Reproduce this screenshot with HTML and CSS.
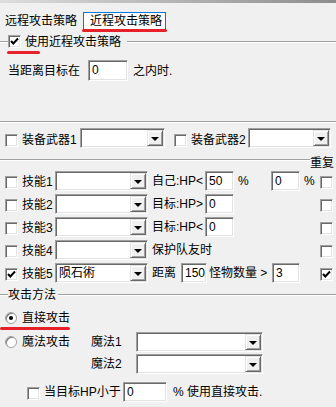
FILE: index.html
```html
<!DOCTYPE html>
<html lang="zh">
<head>
    <meta charset="UTF-8">
    <title>近程攻击策略</title>
    <link rel="stylesheet" href="styles.css">
</head>
<body>
    <div class="topbar"></div>

    <div class="tabs">
        <span class="tab">远程攻击策略</span>
        <span class="tab active">近程攻击策略<i class="mark mark-tab"></i></span>
    </div>

    <div class="ghead g-use">
        <i class="gl gl-left"></i>
        <span class="cb checked"><svg viewBox="0 0 9 9"><path d="M1 4 L3.3 6.5 L8 1.5" /></svg></span>
        <span class="gtitle">使用近程攻击策略</span>
        <i class="gl"></i>
        <i class="mark mark-cb"></i>
    </div>

    <div class="row row-dist">
        <span class="lbl-dist">当距离目标在</span>
        <span class="edit w40">0</span>
        <span class="after">之内时.</span>
    </div>

    <div class="sep sep-weapon"></div>

    <div class="row row-weapon">
        <span class="cb"></span>
        <span class="lbl-w">装备武器1</span>
        <span class="combo w85"><span class="combo-btn"></span></span>
        <span class="cb cb2"></span>
        <span class="lbl-w">装备武器2</span>
        <span class="combo w83"><span class="combo-btn"></span></span>
    </div>

    <div class="ghead g-repeat">
        <i class="gl"></i>
        <span class="gtitle">重复</span>
    </div>

    <div class="skills">
        <div class="row skill">
            <span class="cb"></span>
            <span class="lbl-s">技能1</span>
            <span class="combo w93"><span class="combo-btn"></span></span>
            <span class="cond">自己:HP&lt;</span>
            <span class="edit w29">50</span>
            <span class="pct">%</span>
            <span class="edit w29">0</span>
            <span class="pct2">%</span>
            <span class="cb end"></span>
        </div>
        <div class="row skill">
            <span class="cb"></span>
            <span class="lbl-s">技能2</span>
            <span class="combo w93"><span class="combo-btn"></span></span>
            <span class="cond">目标:HP&gt;</span>
            <span class="edit w29">0</span>
            <span class="cb end"></span>
        </div>
        <div class="row skill">
            <span class="cb"></span>
            <span class="lbl-s">技能3</span>
            <span class="combo w93"><span class="combo-btn"></span></span>
            <span class="cond">目标:HP&lt;</span>
            <span class="edit w29">0</span>
            <span class="cb end"></span>
        </div>
        <div class="row skill">
            <span class="cb"></span>
            <span class="lbl-s">技能4</span>
            <span class="combo w93"><span class="combo-btn"></span></span>
            <span class="cond">保护队友时</span>
            <span class="cb end"></span>
        </div>
        <div class="row skill">
            <span class="cb checked"><svg viewBox="0 0 9 9"><path d="M1 4 L3.3 6.5 L8 1.5" /></svg></span>
            <span class="lbl-s">技能5</span>
            <span class="combo w93"><span class="combo-val">陨石術</span><span class="combo-btn"></span></span>
            <span class="cond-dist">距离</span>
            <span class="edit w26">150</span>
            <span class="cond-cnt">怪物数量 &gt;</span>
            <span class="edit w28">3</span>
            <span class="cb end checked"><svg viewBox="0 0 9 9"><path d="M1 4 L3.3 6.5 L8 1.5" /></svg></span>
        </div>
    </div>

    <div class="ghead g-attack">
        <i class="gl gl-left"></i>
        <span class="gtitle">攻击方法</span>
        <i class="gl"></i>
    </div>

    <div class="row row-direct">
        <span class="radio on"></span>
        <span class="lbl-r">直接攻击</span>
        <i class="mark mark-radio"></i>
    </div>

    <div class="row row-magic">
        <span class="radio"></span>
        <span class="lbl-r">魔法攻击</span>
        <span class="lbl-m">魔法1</span>
        <span class="combo w127"><span class="combo-btn"></span></span>
    </div>
    <div class="row row-magic2">
        <span class="lbl-m">魔法2</span>
        <span class="combo w127"><span class="combo-btn"></span></span>
    </div>

    <div class="row row-hp">
        <span class="cb"></span>
        <span class="lbl-hp">当目标HP小于</span>
        <span class="edit w44">0</span>
        <span class="after-hp">% 使用直接攻击.</span>
    </div>
</body>
</html>
```

FILE: styles.css
```css
body {
    margin: 0;
    width: 336px;
    height: 407px;
    overflow: hidden;
    background: #f0f0f0;
    color: #000;
    font-family: "Liberation Sans", "Noto Sans CJK SC", sans-serif;
    font-size: 12px;
    line-height: 14px;
}

.topbar {
    height: 3px;
    background: linear-gradient(to right, #dedede, #8d8d8d);
}

/* tabs */
.tabs {
    display: flex;
    margin-top: 9px;
    height: 18px;
}
.tab {
    padding: 2px 0 0 5px;
    white-space: nowrap;
}
.tab.active {
    position: relative;
    margin-left: 6px;
    padding: 1px 3px 0 6px;
    border: 1px solid #0078d7;
    background: #fff;
}

/* red annotation marks */
.mark {
    position: absolute;
    height: 3px;
    border-radius: 2px;
    background: #e8202a;
}
.mark-tab { left: -2px; right: -2px; bottom: -3px; }
.mark-cb { left: 7px; top: 16px; width: 33px; }
.mark-radio { left: 0; top: 16px; width: 70px; }

/* group headers with etched line */
.ghead {
    display: flex;
    align-items: center;
    height: 13px;
}
.gl {
    flex: 1;
    height: 0;
    border-top: 1px solid #a0a0a0;
    border-bottom: 1px solid #fff;
}
.gl-left { flex: none; width: 8px; }
.gtitle { white-space: nowrap; }

.g-use {
    position: relative;
    margin-top: 5px;
}
.g-use .cb { margin-right: 4px; }
.g-use .gtitle { margin-right: 6px; }

.g-repeat {
    align-items: flex-start;
    margin-top: 9px;
    height: 12px;
    line-height: 12px;
    padding-right: 2px;
}
.g-repeat .gl { margin-top: 2px; }

.g-attack { margin-top: 4px; }
.g-attack .gtitle { margin-right: 2px; }

.sep {
    height: 0;
    border-top: 1px solid #a0a0a0;
    border-bottom: 1px solid #fff;
}
.sep-weapon { margin-top: 40px; }

/* generic controls */
.row {
    display: flex;
    align-items: center;
    white-space: nowrap;
}

.cb {
    display: inline-flex;
    align-items: center;
    justify-content: center;
    flex: none;
    box-sizing: border-box;
    width: 13px;
    height: 13px;
    background: #fff;
    border: 1px solid;
    border-color: #a0a0a0 #fff #fff #a0a0a0;
    box-shadow: inset 1px 1px #696969, inset -1px -1px #e3e3e3;
}
.cb svg {
    width: 9px;
    height: 9px;
}
.cb path {
    fill: none;
    stroke: #000;
    stroke-width: 2;
}

.radio {
    flex: none;
    box-sizing: border-box;
    width: 12px;
    height: 12px;
    border-radius: 50%;
    background: #fff;
    border: 1px solid #a0a0a0;
    box-shadow: inset 1px 1px #7a7a7a;
    display: inline-flex;
    align-items: center;
    justify-content: center;
}
.radio.on::after {
    content: "";
    width: 4px;
    height: 4px;
    border-radius: 50%;
    background: #000;
}

.edit, .combo {
    flex: none;
    box-sizing: border-box;
    height: 20px;
    background: #fff;
    border: 1px solid;
    border-color: #a0a0a0 #fff #fff #a0a0a0;
    box-shadow: inset 1px 1px #696969, inset -1px -1px #e3e3e3;
    padding: 2px 0 0 3px;
}
.combo {
    position: relative;
    display: flex;
    padding: 2px 2px 2px 3px;
}
.combo-val { flex: 1; line-height: 14px; }
.combo-btn {
    position: absolute;
    top: 1px;
    right: 1px;
    bottom: 1px;
    width: 16px;
    box-sizing: border-box;
    background: #f0f0f0;
    border: 1px solid;
    border-color: #e3e3e3 #696969 #696969 #e3e3e3;
    box-shadow: inset 1px 1px #fff, inset -1px -1px #a0a0a0;
}
.combo-btn::after {
    content: "";
    position: absolute;
    left: 3px;
    top: 6px;
    border-left: 4px solid transparent;
    border-right: 4px solid transparent;
    border-top: 4px solid #000;
}

.w26 { width: 26px; }
.w28 { width: 28px; }
.w29 { width: 29px; }
.w40 { width: 40px; }
.w44 { width: 44px; }
.w83 { width: 83px; }
.w85 { width: 85px; }
.w93 { width: 93px; }
.w127 { width: 127px; }

/* distance row */
.row-dist {
    margin-top: 12px;
    height: 21px;
    padding-left: 8px;
}
.row-dist .edit { height: 21px; }
.lbl-dist { width: 72px; margin-right: 8px; }
.after { margin-left: 5px; }

/* weapon row */
.row-weapon {
    margin-top: 5px;
    height: 20px;
    padding-left: 5px;
}
.row-weapon .cb { margin: 4px 4px 0 0; }
.row-weapon .cb2 { margin-left: 9px; }
.lbl-w { width: 55px; margin-right: 3px; padding-top: 3px; }
.row-weapon .lbl-w + .combo.w83 { margin-left: -1px; }

/* skill rows */
.skill {
    height: 23px;
    padding: 0 3px 0 5px;
}
.skill .cb { margin: 3px 4px 0 0; }
.skill .cb.end { margin: 3px 0 0 auto; }
.lbl-s { width: 33px; padding-top: 2px; }
.cond { width: 53px; margin-left: 4px; }
.pct { width: 33px; margin-left: 4px; }
.pct2 { margin-left: 4px; }
.cond-dist { width: 29px; margin-left: 4px; }
.cond-cnt { width: 63px; margin-left: 2px; }

/* attack method */
.row-direct {
    position: relative;
    margin-top: 10px;
    height: 14px;
    padding-left: 5px;
}
.lbl-r { width: 48px; margin-left: 5px; }
.row-magic {
    margin-top: 7px;
    height: 20px;
    padding-left: 5px;
}
.row-magic .lbl-m { margin-left: 21px; }
.lbl-m { width: 45px; }
.row-magic2 {
    margin-top: 2px;
    height: 20px;
    padding-left: 91px;
}

.row-hp {
    margin-top: 8px;
    height: 20px;
    padding-left: 27px;
}
.row-hp .cb { margin: 2px 4px 0 0; }
.lbl-hp { width: 72px; margin-right: 7px; }
.after-hp { margin-left: 6px; }
```
